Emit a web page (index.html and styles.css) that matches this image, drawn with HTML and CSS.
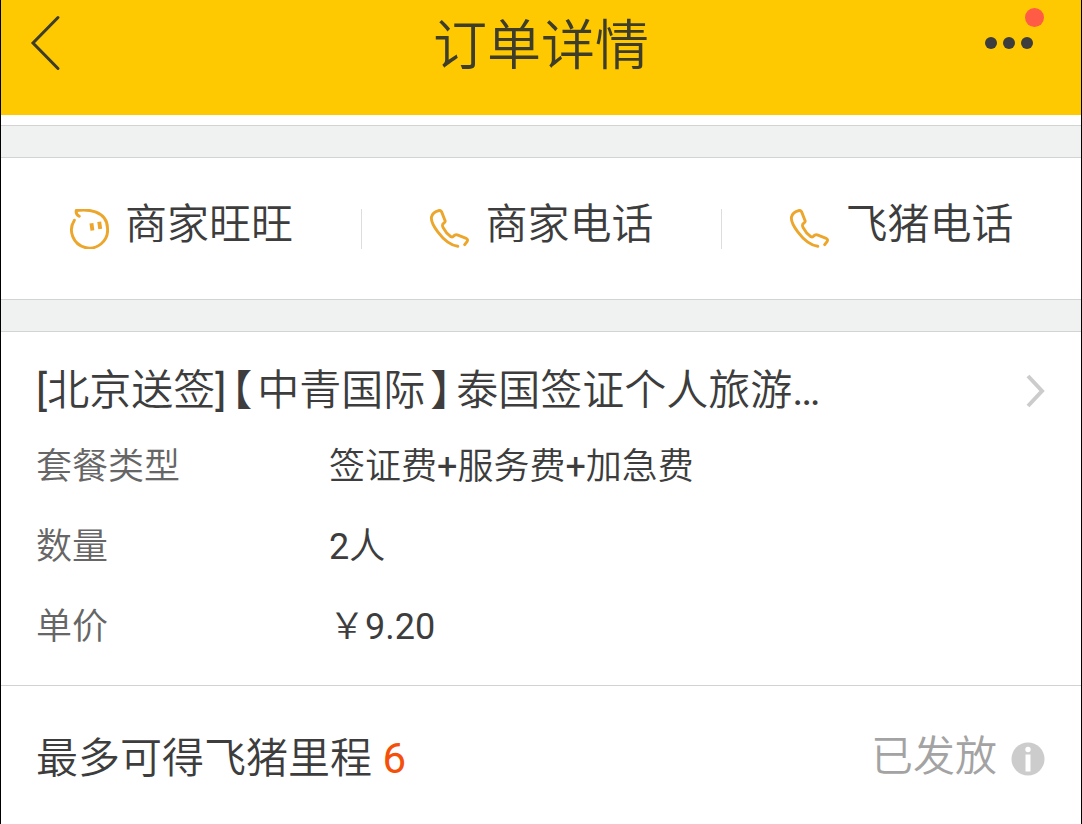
FILE: index.html
```html
<!DOCTYPE html>
<html lang="zh-CN">
<head>
<meta charset="utf-8">
<meta name="viewport" content="width=device-width, initial-scale=1">
<title>订单详情</title>
<link rel="stylesheet" href="styles.css">
</head>
<body>
<div class="page">
  <header class="topbar">
    <button class="icon-button" type="button" aria-label="返回">
      <svg class="back-icon" width="32" height="58" viewBox="0 0 32 58" aria-hidden="true"><path d="M29 3.500 4 29 29 54.500"/></svg>
    </button>
    <h1 class="topbar-title">订单详情</h1>
    <button class="icon-button more-button" type="button" aria-label="更多">
      <svg class="more-icon" width="48" height="12" viewBox="0 0 48 12" aria-hidden="true"><circle cx="6" cy="6" r="6"/><circle cx="24" cy="6" r="6"/><circle cx="42" cy="6" r="6"/></svg>
      <span class="more-badge"></span>
    </button>
  </header>
  <main>
    <div class="band"></div>
    <nav class="contacts">
      <button class="contact" type="button">
        <svg class="line-icon" width="40" height="40" viewBox="-1 1 41 41" aria-hidden="true"><path d="M9.500 8.500C7 7 6 4.500 6.400 2.500 13 1.800 21 2 26 4 34 7 38.500 13 38.500 21A18.500 18.500 0 1 1 4.500 12.500"/><path class="eyes" d="M22 15.500 23 23M30 14 31 21.500"/></svg>
        <span class="contact-label">商家旺旺</span>
      </button>
      <button class="contact" type="button">
        <svg class="line-icon" width="40" height="40" viewBox="-1 0 41 41" aria-hidden="true"><path d="M28.500 38.200C22 37.500 14 31.500 8 23.500 3.500 17.500 1 12 1.500 8.500 2 5.500 5 2.500 9.500 1.500 10.800 1.300 11.500 2 12 3L15.500 12C15.800 13 15.300 13.800 14.300 14.500 12.500 15.500 12.300 16.500 13.500 19 15.500 23 18.500 26.300 21.500 28.400 22.700 29 23.500 28.800 24.500 27.500 25.500 26.400 26.500 26.200 28 26.600L36.500 29.800C38.500 30.600 39 31.700 38 33.400L35.600 36.500"/></svg>
        <span class="contact-label">商家电话</span>
      </button>
      <button class="contact" type="button">
        <svg class="line-icon" width="40" height="40" viewBox="-1 0 41 41" aria-hidden="true"><path d="M28.500 38.200C22 37.500 14 31.500 8 23.500 3.500 17.500 1 12 1.500 8.500 2 5.500 5 2.500 9.500 1.500 10.800 1.300 11.500 2 12 3L15.500 12C15.800 13 15.300 13.800 14.300 14.500 12.500 15.500 12.300 16.500 13.500 19 15.500 23 18.500 26.300 21.500 28.400 22.700 29 23.500 28.800 24.500 27.500 25.500 26.400 26.500 26.200 28 26.600L36.500 29.800C38.500 30.600 39 31.700 38 33.400L35.600 36.500"/></svg>
        <span class="contact-label">飞猪电话</span>
      </button>
    </nav>
    <div class="band"></div>
    <section class="order">
      <a class="order-link" href="#">
        <span class="order-title">[北京送签]<span class="bracket">【</span>中青国际<span class="bracket">】</span>泰国签证个人旅游…</span>
        <svg class="chevron" width="20" height="34" viewBox="0 0 20 34" aria-hidden="true"><path d="M3 2 17 17 3 32"/></svg>
      </a>
      <dl class="facts">
        <dt>套餐类型</dt><dd>签证费+服务费+加急费</dd>
        <dt>数量</dt><dd>2人</dd>
        <dt>单价</dt><dd>￥9.20</dd>
      </dl>
    </section>
    <section class="miles">
      <p class="miles-text">最多可得飞猪里程 <span class="miles-count">6</span></p>
      <p class="miles-status">已发放</p>
      <button class="icon-button info-button" type="button" aria-label="说明">
        <svg width="34" height="34" viewBox="0 0 34 34" aria-hidden="true"><circle cx="17" cy="17" r="16.500" fill="#ccc"/><circle cx="17" cy="7.500" r="2.700" fill="#fff"/><path d="M14.500 12.500H19.500V29.500H14.500Z" fill="#fff"/></svg>
      </button>
    </section>
  </main>
</div>
</body>
</html>
```

FILE: styles.css
```css
* {
  box-sizing: border-box;
}

body {
  margin: 0;
  background: #fff;
  color: #3d3d3d;
  font-family: Roboto, "Noto Sans CJK SC DemiLight", "Noto Sans CJK SC", sans-serif;
  font-weight: 400;
}

button {
  padding: 0;
  border: 0;
  background: none;
  color: inherit;
  font: inherit;
  cursor: pointer;
}

svg {
  display: block;
  fill: none;
}

.page {
  min-height: 100vh;
  border: solid #000;
  border-width: 0 1px;
}

.topbar {
  display: grid;
  grid-template-columns: 1fr auto 1fr;
  align-items: center;
  padding: 6px 48px 35px 28px;
  background: #ffc902;
}

.icon-button {
  position: relative;
  justify-self: start;
}

.back-icon {
  stroke: #3d3d2a;
  stroke-width: 3;
  stroke-linecap: round;
}

.topbar-title {
  margin: 0;
  padding: 8px 0 0 20px;
  color: #3d3d2a;
  font-size: 54px;
  font-weight: 400;
  line-height: 66px;
}

.more-button {
  justify-self: end;
}

.more-icon {
  fill: #3d3d3d;
}

.more-badge {
  position: absolute;
  top: -29px;
  right: -11px;
  width: 19px;
  height: 19px;
  border-radius: 50%;
  background: #ff5b45;
}

.band {
  height: 33px;
  border: solid #d2d3d3;
  border-width: 1px 0;
  background: #f0f2f1;
}

.topbar + main {
  padding-top: 10px;
}

.contacts {
  display: grid;
  grid-template-columns: repeat(3, 1fr);
  padding: 51px 0 50px;
}

.contact {
  display: flex;
  align-items: center;
  justify-content: center;
  gap: 16px;
  height: 40px;
}

.contact + .contact {
  border-left: 1px solid #ddd;
}

.line-icon {
  stroke: #eca62c;
  stroke-width: 3;
  stroke-linecap: round;
  stroke-linejoin: round;
}

.eyes {
  stroke-width: 4;
  stroke-linecap: butt;
}

.contact-label {
  padding-bottom: 8px;
  font-size: 42px;
  line-height: 48px;
}

.order {
  padding: 31px 36px 34px 35px;
  border-bottom: 1px solid #d2d2d2;
}

.order-link {
  display: flex;
  align-items: center;
  justify-content: space-between;
  color: inherit;
  text-decoration: none;
}

.order-title {
  font-size: 42px;
  line-height: 56px;
}

.bracket {
  padding: 0 5px;
  font-feature-settings: "halt";
}

.chevron {
  stroke: #ccc;
  stroke-width: 4;
}

.facts {
  display: grid;
  grid-template-columns: 293px 1fr;
  row-gap: 32px;
  margin: 24px 0 0;
  font-size: 36px;
  line-height: 48px;
}

.facts dt {
  color: #666;
}

.facts dd {
  margin: 0;
}

.miles {
  display: flex;
  align-items: center;
  padding: 43px 36px 36px 35px;
  font-size: 42px;
  line-height: 56px;
}

.miles-text {
  flex: 1;
  margin: 0;
}

.miles-count {
  color: #f5500a;
}

.miles-status {
  margin: 0 14px 0 0;
  padding-bottom: 4px;
  color: #a3a3a3;
}
```
